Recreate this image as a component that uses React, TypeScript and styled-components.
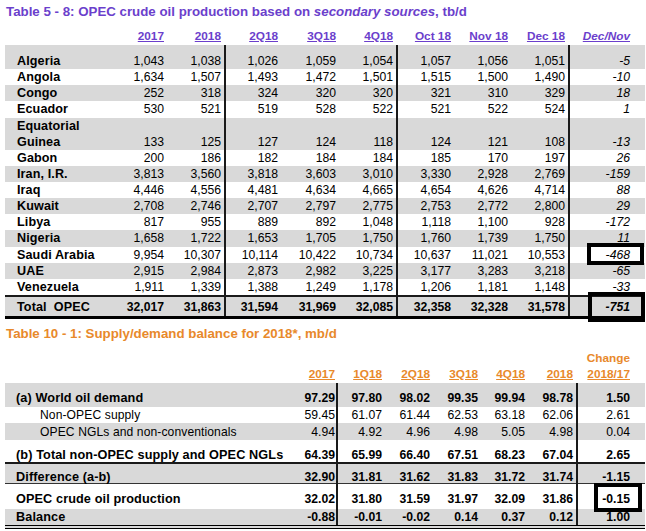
import React from "react";
import styled, { createGlobalStyle } from "styled-components";

const Global = createGlobalStyle`
  html, body { margin: 0; padding: 0; background: #fff; }
  body {
    font-family: "Liberation Sans", Arial, sans-serif;
    color: #000;
    width: 646px;
    height: 531px;
    overflow: hidden;
  }
`;

const PURPLE = "#6b3fcc";
const ORANGE = "#e8892b";
const GRAY = "#d9d9d9";
const LINE = "#1a1a1a";

const GRID1 = "105px 57px 59px 55px 58px 59px 56px 57px 59px 75px";
const GRID2 = "285px 48px 47px 48px 48px 47px 50px 67px";

const Page = styled.div`
  padding: 4px 1px 0 5px;
  width: 640px;
`;

const Title = styled.div<{ $color: string; $gap?: number }>`
  font-size: 13.3px;
  font-weight: bold;
  line-height: 16px;
  height: 16px;
  color: ${(p) => p.$color};
  margin-top: ${(p) => p.$gap ?? 0}px;
  padding-left: 1px;
  white-space: nowrap;
  em { font-style: italic; }
`;

const HeadRow = styled.div<{ $grid: string; $h: number }>`
  display: grid;
  grid-template-columns: ${(p) => p.$grid};
  height: ${(p) => p.$h}px;
  align-items: end;
  padding-bottom: 1px;
  box-sizing: border-box;
`;

const HeadCell = styled.div<{ $color: string; $italic?: boolean; $pad: number }>`
  font-size: 11.8px;
  font-weight: bold;
  line-height: 16px;
  color: ${(p) => p.$color};
  text-align: right;
  padding-right: ${(p) => p.$pad}px;
  font-style: ${(p) => (p.$italic ? "italic" : "normal")};
  span { text-decoration: underline; text-underline-offset: 1px; }
`;

const Row = styled.div<{
  $grid: string;
  $h: number;
  $shade?: boolean;
  $top?: string;
  $bottom?: string;
}>`
  display: grid;
  grid-template-columns: ${(p) => p.$grid};
  height: ${(p) => p.$h}px;
  background: ${(p) => (p.$shade ? GRAY : "#fff")};
  border-top: ${(p) => p.$top ?? "none"};
  border-bottom: ${(p) => p.$bottom ?? "none"};
  box-sizing: content-box;
`;

const Label = styled.div<{ $indent: number; $bold?: boolean; $pt: number; $size: number }>`
  padding-left: ${(p) => p.$indent}px;
  padding-top: ${(p) => p.$pt}px;
  font-size: ${(p) => p.$size}px;
  font-weight: ${(p) => (p.$bold ? "bold" : "normal")};
  line-height: 16.14px;
  white-space: pre;
  letter-spacing: 0.1px;
`;

const Num = styled.div<{
  $sep?: boolean;
  $pad: number;
  $bold?: boolean;
  $italic?: boolean;
  $pt: number;
  $alignEnd?: boolean;
}>`
  position: relative;
  display: flex;
  justify-content: flex-end;
  align-items: ${(p) => (p.$alignEnd ? "flex-end" : "flex-start")};
  padding-right: ${(p) => p.$pad}px;
  padding-top: ${(p) => p.$pt}px;
  border-right: ${(p) => (p.$sep ? `2px solid ${LINE}` : "none")};
  box-sizing: border-box;
  font-size: 12.2px;
  line-height: 16.14px;
  font-weight: ${(p) => (p.$bold ? "bold" : "normal")};
  font-style: ${(p) => (p.$italic ? "italic" : "normal")};
`;

const Highlight = styled.div<{ $l: number; $r: number; $t: number; $b: number }>`
  position: absolute;
  left: ${(p) => p.$l}px;
  right: ${(p) => p.$r}px;
  top: ${(p) => p.$t}px;
  bottom: ${(p) => p.$b}px;
  border: 4px solid #000;
  pointer-events: none;
`;

/* ---------- Table 5-8 ---------- */

const heads1 = ["2017", "2018", "2Q18", "3Q18", "4Q18", "Oct 18", "Nov 18", "Dec 18", "Dec/Nov"];
const seps1 = [false, true, false, false, true, false, false, true, false];
const pads1 = [3, 3, 3, 3, 3, 3, 3, 3, 15];

type R1 = { name: string; v: string[]; tall?: boolean };
const rows1: R1[] = [
  { name: "Algeria", v: ["1,043", "1,038", "1,026", "1,059", "1,054", "1,057", "1,056", "1,051", "-5"] },
  { name: "Angola", v: ["1,634", "1,507", "1,493", "1,472", "1,501", "1,515", "1,500", "1,490", "-10"] },
  { name: "Congo", v: ["252", "318", "324", "320", "320", "321", "310", "329", "18"] },
  { name: "Ecuador", v: ["530", "521", "519", "528", "522", "521", "522", "524", "1"] },
  { name: "Equatorial\nGuinea", tall: true, v: ["133", "125", "127", "124", "118", "124", "121", "108", "-13"] },
  { name: "Gabon", v: ["200", "186", "182", "184", "184", "185", "170", "197", "26"] },
  { name: "Iran, I.R.", v: ["3,813", "3,560", "3,818", "3,603", "3,010", "3,330", "2,928", "2,769", "-159"] },
  { name: "Iraq", v: ["4,446", "4,556", "4,481", "4,634", "4,665", "4,654", "4,626", "4,714", "88"] },
  { name: "Kuwait", v: ["2,708", "2,746", "2,707", "2,797", "2,775", "2,753", "2,772", "2,800", "29"] },
  { name: "Libya", v: ["817", "955", "889", "892", "1,048", "1,118", "1,100", "928", "-172"] },
  { name: "Nigeria", v: ["1,658", "1,722", "1,653", "1,705", "1,750", "1,760", "1,739", "1,750", "11"] },
  { name: "Saudi Arabia", v: ["9,954", "10,307", "10,114", "10,422", "10,734", "10,637", "11,021", "10,553", "-468"] },
  { name: "UAE", v: ["2,915", "2,984", "2,873", "2,982", "3,225", "3,177", "3,283", "3,218", "-65"] },
  { name: "Venezuela", v: ["1,911", "1,339", "1,388", "1,249", "1,178", "1,206", "1,181", "1,148", "-33"] },
];
const total1 = ["32,017", "31,863", "31,594", "31,969", "32,085", "32,358", "32,328", "31,578", "-751"];

const RH = 16.14;

function Table1() {
  return (
    <>
      <HeadRow $grid={GRID1} $h={25}>
        <div />
        {heads1.map((h, i) => (
          <HeadCell key={h} $color={PURPLE} $italic={i === 8} $pad={pads1[i] + (seps1[i] ? 2 : 0)}>
            <span>{h}</span>
          </HeadCell>
        ))}
      </HeadRow>
      <Row $grid={GRID1} $h={8} $shade>
        <div />
        {seps1.map((s, i) => (
          <Num key={i} $sep={s} $pad={0} $pt={0} />
        ))}
      </Row>
      {rows1.map((r, ri) => (
        <Row key={r.name} $grid={GRID1} $h={r.tall ? RH * 2 : RH} $shade={ri % 2 === 0}>
          <Label $indent={12} $bold $pt={0} $size={12.6}>
            {r.name}
          </Label>
          {r.v.map((v, i) => (
            <Num key={i} $sep={seps1[i]} $pad={pads1[i]} $pt={0} $italic={i === 8} $alignEnd={r.tall}>
              {v}
              {r.name === "Saudi Arabia" && i === 8 && <Highlight $l={17} $r={1} $t={-4} $b={-2} />}
            </Num>
          ))}
        </Row>
      ))}
      <Row $grid={GRID1} $h={19} $shade $top={`2px solid ${LINE}`} $bottom="3px solid #000">
        <Label $indent={12} $bold $pt={2} $size={12.6}>
          {"Total  OPEC"}
        </Label>
        {total1.map((v, i) => (
          <Num key={i} $sep={seps1[i]} $pad={pads1[i]} $pt={2} $bold $italic={i === 8}>
            {v}
            {i === 8 && <Highlight $l={18} $r={0} $t={-5} $b={-6} />}
          </Num>
        ))}
      </Row>
    </>
  );
}

/* ---------- Table 10-1 ---------- */

const heads2 = ["2017", "1Q18", "2Q18", "3Q18", "4Q18", "2018", "2018/17"];
const seps2 = [true, false, false, false, false, true, false];
const pads2 = [1, 3, 3, 3, 3, 3, 15];

type R2 = {
  label: string;
  v: string[];
  bold: boolean;
  changeBold: boolean;
  indent: number;
  h: number;
  pt: number;
  shade: boolean;
  bottom?: string;
  box?: boolean;
};

const rows2: R2[] = [
  { label: "(a) World oil demand", v: ["97.29", "97.80", "98.02", "99.35", "99.94", "98.78", "1.50"], bold: true, changeBold: true, indent: 11, h: 24, pt: 7, shade: true },
  { label: "Non-OPEC supply", v: ["59.45", "61.07", "61.44", "62.53", "63.18", "62.06", "2.61"], bold: false, changeBold: false, indent: 35, h: 16, pt: 0, shade: false },
  { label: "OPEC NGLs and non-conventionals", v: ["4.94", "4.92", "4.96", "4.98", "5.05", "4.98", "0.04"], bold: false, changeBold: false, indent: 35, h: 17, pt: 1, shade: true },
  { label: "(b) Total non-OPEC supply and OPEC NGLs", v: ["64.39", "65.99", "66.40", "67.51", "68.23", "67.04", "2.65"], bold: true, changeBold: true, indent: 11, h: 22, pt: 7, shade: false, bottom: `2px solid ${LINE}` },
  { label: "Difference (a-b)", v: ["32.90", "31.81", "31.62", "31.83", "31.72", "31.74", "-1.15"], bold: true, changeBold: true, indent: 11, h: 19, pt: 5, shade: true, bottom: "1px solid #333" },
  { label: "OPEC crude oil production", v: ["32.02", "31.80", "31.59", "31.97", "32.09", "31.86", "-0.15"], bold: true, changeBold: true, indent: 11, h: 25, pt: 7, shade: false, box: true },
  { label: "Balance", v: ["-0.88", "-0.01", "-0.02", "0.14", "0.37", "0.12", "1.00"], bold: true, changeBold: true, indent: 11, h: 16, pt: 0, shade: true, bottom: "4px double #000" },
];

const ChangeHead = styled.div`
  display: flex;
  flex-direction: column;
  align-items: flex-end;
`;

function Table2() {
  return (
    <>
      <HeadRow $grid={GRID2} $h={41}>
        <div />
        {heads2.map((h, i) => (
          <HeadCell key={h} $color={ORANGE} $pad={pads2[i] + (seps2[i] ? 2 : 0)}>
            {i === 6 ? (
              <ChangeHead>
                <div>Change</div>
                <span>{h}</span>
              </ChangeHead>
            ) : (
              <span>{h}</span>
            )}
          </HeadCell>
        ))}
      </HeadRow>
      {rows2.map((r) => (
        <Row key={r.label} $grid={GRID2} $h={r.h} $shade={r.shade} $bottom={r.bottom}>
          <Label $indent={r.indent} $bold={r.bold} $pt={r.pt} $size={r.bold ? 12.7 : 12.1}>
            {r.label}
          </Label>
          {r.v.map((v, i) => (
            <Num key={i} $sep={seps2[i]} $pad={pads2[i]} $pt={r.pt} $bold={i === 6 ? r.changeBold : r.bold}>
              {v}
              {r.box && i === 6 && <Highlight $l={16} $r={3} $t={-1} $b={-3} />}
            </Num>
          ))}
        </Row>
      ))}
    </>
  );
}

export default function App() {
  return (
    <>
      <Global />
      <Page>
        <Title $color={PURPLE}>
          Table 5 - 8: OPEC crude oil production based on <em>secondary sources</em>, tb/d
        </Title>
        <Table1 />
        <Title $color={ORANGE} $gap={7}>
          Table 10 - 1: Supply/demand balance for 2018*, mb/d
        </Title>
        <Table2 />
      </Page>
    </>
  );
}
